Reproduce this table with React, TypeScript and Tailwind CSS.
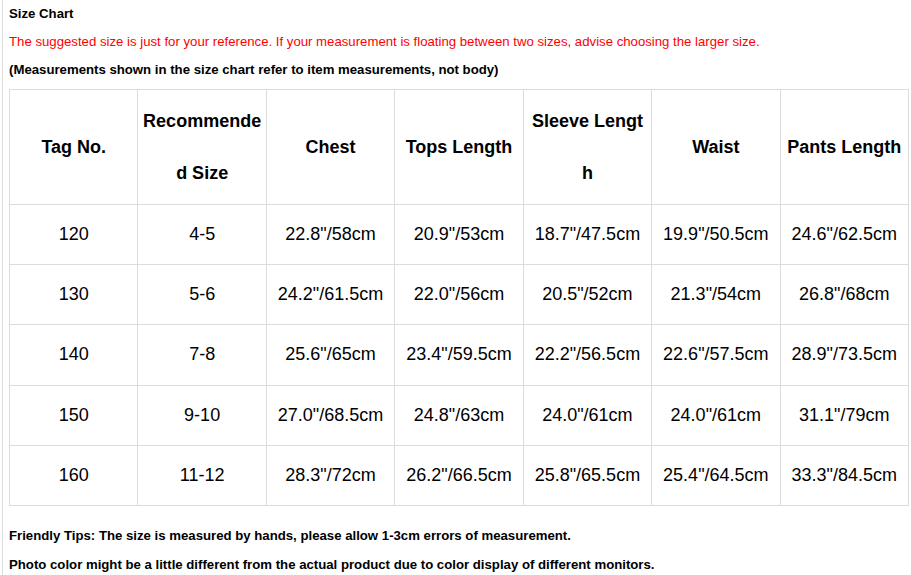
const headers = ["Tag No.", "Recommended Size", "Chest", "Tops Length", "Sleeve Length", "Waist", "Pants Length"];

const rows = [
  ["120", "4-5", "22.8\"/58cm", "20.9\"/53cm", "18.7\"/47.5cm", "19.9\"/50.5cm", "24.6\"/62.5cm"],
  ["130", "5-6", "24.2\"/61.5cm", "22.0\"/56cm", "20.5\"/52cm", "21.3\"/54cm", "26.8\"/68cm"],
  ["140", "7-8", "25.6\"/65cm", "23.4\"/59.5cm", "22.2\"/56.5cm", "22.6\"/57.5cm", "28.9\"/73.5cm"],
  ["150", "9-10", "27.0\"/68.5cm", "24.8\"/63cm", "24.0\"/61cm", "24.0\"/61cm", "31.1\"/79cm"],
  ["160", "11-12", "28.3\"/72cm", "26.2\"/66.5cm", "25.8\"/65.5cm", "25.4\"/64.5cm", "33.3\"/84.5cm"],
];

export default function App() {
  return (
    <div className="w-[911px] h-[575px] overflow-hidden bg-white font-['Liberation_Sans',Arial,sans-serif] text-black">
      <div className="ml-[2px] h-full border-l border-[#dcdcdc] pl-[6px]">
        <p className="h-[28px] leading-[28px] text-[13.2px] font-bold">Size Chart</p>
        <p className="h-[28px] leading-[28px] text-[13.2px] text-[#ff0000]">
          The suggested size is just for your reference. If your measurement is floating between two sizes, advise choosing the larger size.
        </p>
        <p className="h-[27px] leading-[27px] text-[13.2px] font-bold">
          (Measurements shown in the size chart refer to item measurements, not body)
        </p>
        <table className="mt-[6px] w-[900px] table-fixed border-collapse text-[18px]">
          <thead>
            <tr className="h-[114px]">
              {headers.map((h) => (
                <th key={h} className="border border-[#dcdcdc] px-[3.5px] py-[5px] text-center font-bold leading-[52px] break-all">
                  {h}
                </th>
              ))}
            </tr>
          </thead>
          <tbody>
            {rows.map((r) => (
              <tr key={r[0]} className="h-[60.2px]">
                {r.map((c, i) => (
                  <td key={i} className="border border-[#dcdcdc] px-[2px] text-center whitespace-nowrap">
                    {c}
                  </td>
                ))}
              </tr>
            ))}
          </tbody>
        </table>
        <div className="mt-[15px] text-[13.2px] font-bold">
          <p className="h-[29px] leading-[29px]">Friendly Tips: The size is measured by hands, please allow 1-3cm errors of measurement.</p>
          <p className="h-[29px] leading-[29px]">Photo color might be a little different from the actual product due to color display of different monitors.</p>
        </div>
      </div>
    </div>
  );
}
